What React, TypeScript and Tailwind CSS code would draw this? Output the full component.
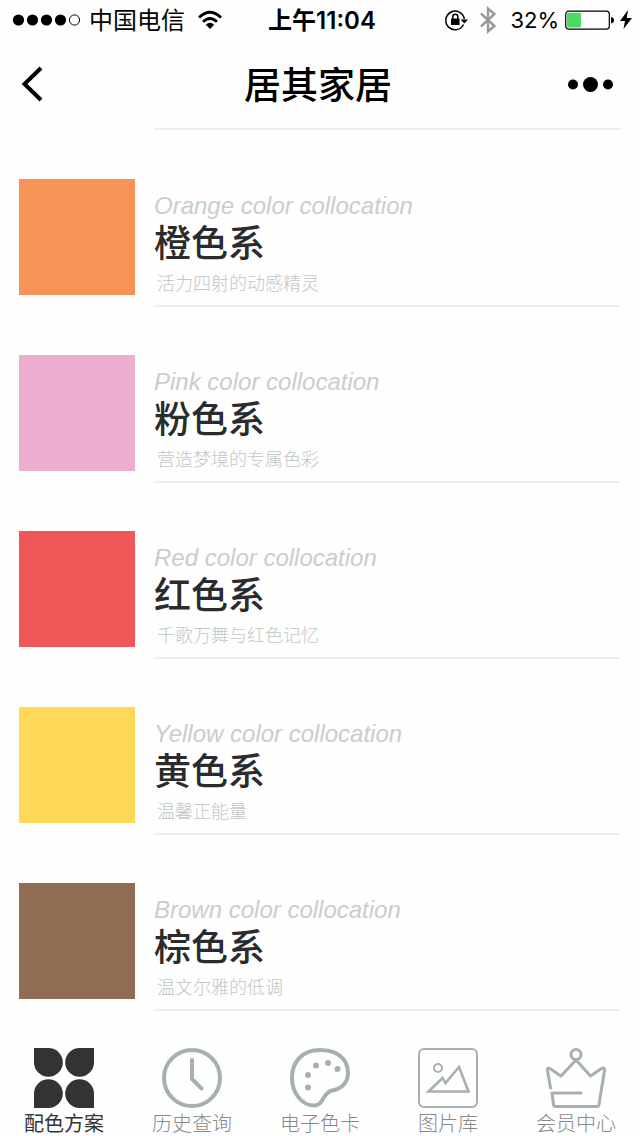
import type { ReactNode } from "react";

interface ColorSeries {
  en: string;
  name: string;
  desc: string;
  swatch: string;
}

const SERIES: ColorSeries[] = [
  { en: "Orange", name: "橙色系", desc: "活力四射的动感精灵", swatch: "bg-[#f79357]" },
  { en: "Pink", name: "粉色系", desc: "营造梦境的专属色彩", swatch: "bg-[#ebaece]" },
  { en: "Red", name: "红色系", desc: "千歌万舞与红色记忆", swatch: "bg-[#f15658]" },
  { en: "Yellow", name: "黄色系", desc: "温馨正能量", swatch: "bg-[#ffd858]" },
  { en: "Brown", name: "棕色系", desc: "温文尔雅的低调", swatch: "bg-[#906c55]" },
];

const PetalsIcon = () => (
  <svg className="size-[60px]" viewBox="0 0 60 60" fill="#333333">
    <path d="M0 0H14.400A14.400 14.400 0 1 1 0 14.400Z" />
    <path d="M60 0H45.600A14.400 14.400 0 1 0 60 14.400Z" />
    <path d="M0 60H14.400A14.400 14.400 0 1 0 0 45.600Z" />
    <path d="M60 60H45.600A14.400 14.400 0 1 1 60 45.600Z" />
  </svg>
);

const ClockIcon = () => (
  <svg className="size-[60px]" viewBox="0 0 60 60" fill="none" stroke="#a7b0b1" strokeWidth="4" strokeLinecap="round" strokeLinejoin="round">
    <circle cx="30" cy="30" r="28" />
    <path d="M30 12V31L39.500 40.500" />
  </svg>
);

const PaletteIcon = () => (
  <svg className="size-[60px]" viewBox="0 0 60 60" fill="none" stroke="#a7b0b1" strokeWidth="4">
    <path d="M30 2C12 2 2 14 2 30C2 45 12 57.500 24 57.500C34 57.500 32 45 42 42.500C52 41 58 34 58 25C58 10 46 2 30 2Z" />
    <g fill="#a7b0b1" stroke="none">
      <circle cx="18" cy="27" r="3" />
      <circle cx="18" cy="39.500" r="3" />
      <circle cx="26" cy="17.500" r="3" />
      <circle cx="38" cy="15" r="3" />
      <circle cx="47.500" cy="21" r="3" />
    </g>
  </svg>
);

const PictureIcon = () => (
  <svg className="size-[60px]" viewBox="0 0 60 60" fill="none" stroke="#a7b0b1" strokeWidth="2">
    <rect x="1" y="1" width="58" height="58" rx="5" />
    <circle cx="20" cy="20" r="4" />
    <path d="M10.500 43.500L24.500 30L27.500 35L41 19L50.500 43.500Z" strokeWidth="2.600" />
  </svg>
);

const CrownIcon = () => (
  <svg className="size-[60px]" viewBox="0 0 60 60" fill="none" stroke="#a7b0b1" strokeWidth="3" strokeLinecap="round" strokeLinejoin="round">
    <circle cx="30" cy="6.500" r="5" />
    <path d="M4.500 40L1.500 22.500Q1 19 4.500 21L15 28L30 12L44.500 28L55.500 20.500Q59 19 58.500 22.500L53 56.500Q52.600 58.500 51 58.500H9.500Q7.800 58.500 7.500 56.500L6 45H35" />
  </svg>
);

const TABS: { label: string; icon: ReactNode; active?: boolean }[] = [
  { label: "配色方案", icon: <PetalsIcon />, active: true },
  { label: "历史查询", icon: <ClockIcon /> },
  { label: "电子色卡", icon: <PaletteIcon /> },
  { label: "图片库", icon: <PictureIcon /> },
  { label: "会员中心", icon: <CrownIcon /> },
];

const StatusBar = () => (
  <div className="grid h-10 grid-cols-[1fr_auto_1fr] items-center pr-2 pl-3 text-2xl">
    <div className="flex items-center">
      <svg className="h-3 w-[69px]" viewBox="0 0 69 12">
        <circle cx="6.500" cy="6" r="5.600" />
        <circle cx="20.500" cy="6" r="5.600" />
        <circle cx="34.500" cy="6" r="5.600" />
        <circle cx="48.500" cy="6" r="5.600" />
        <circle cx="62.500" cy="6" r="5.100" fill="none" stroke="#000" />
      </svg>
      <span className="ml-2 pt-0.5">中国电信</span>
      <svg className="ml-3 h-5 w-[26px]" viewBox="0 0 26 20" fill="none" stroke="#000" strokeWidth="2.800">
        <path d="M2 7.500Q13 -3 24 7.500" />
        <path d="M6 11.800Q13 5 20 11.800" />
        <path d="M8.800 14.800Q13 10.800 17.200 14.800L13 19Z" fill="#000" stroke="none" />
      </svg>
    </div>
    <time className="pt-0.5 font-semibold">上午11:04</time>
    <div className="flex items-center justify-end">
      <svg className="h-6 w-6" viewBox="0 0 24 24" fill="none" stroke="#000" strokeWidth="1.500">
        <path d="M19.500 16.500A9.300 9.300 0 1 1 20.300 11" />
        <path d="M16.500 11.500H24L20.300 15.500Z" fill="#000" stroke="none" />
        <rect x="7" y="10.500" width="8.500" height="6.500" fill="#000" stroke="none" />
        <path d="M8.800 11V8.800A2.500 2.500 0 0 1 13.800 8.800V11" />
      </svg>
      <svg className="ml-3 h-7 w-4" viewBox="0 0 16 28" fill="none" stroke="#999" strokeWidth="2.400">
        <path d="M1 7.500L14.500 20L8 25.500V2.500L14.500 8L1 20.500" />
      </svg>
      <span className="ml-3.5 pt-0.5 text-[22px]">32%</span>
      <svg className="ml-1.5 h-5 w-[49px]" viewBox="0 0 49 20">
        <rect x="0.700" y="1.200" width="43.600" height="18" rx="3" fill="none" stroke="#000" strokeWidth="1.200" />
        <rect x="2" y="2.800" width="14" height="14.800" rx="1" fill="#4cd964" />
        <path d="M46 7Q49 7.500 49 10.200T46 13.500Z" />
      </svg>
      <svg className="ml-1.5 h-5 w-3" viewBox="0 0 12 20">
        <path d="M8 0L0 11H5L3.500 19L12 8H6.800Z" />
      </svg>
    </div>
  </div>
);

const SeriesRow = ({ item }: { item: ColorSeries }) => (
  <li className="pt-12">
    <a href="#" className="flex gap-[19px]">
      <div className={`size-[116px] shrink-0 ${item.swatch}`} />
      <div className="h-32 flex-1 border-b-2 border-[#eeeeee] pt-[13px]">
        <p className="font-['Liberation_Sans','Arial',sans-serif] text-2xl leading-7 text-[#c7cecd] italic">
          {item.en} color collocation
        </p>
        <h2 className="text-[37px] leading-12 font-medium text-[#2b2b2b]">{item.name}</h2>
        <p className="pl-[3px] text-lg leading-8 font-light text-[#c0c8c7]">{item.desc}</p>
      </div>
    </a>
  </li>
);

const App = () => {
  return (
    <div className="flex min-h-screen flex-col bg-[#fefefe] font-['Inter','Noto_Sans_CJK_SC',sans-serif] text-black">
      <StatusBar />
      <header className="grid h-[88px] grid-cols-[1fr_auto_1fr] items-center px-5">
        <button type="button" aria-label="返回" className="justify-self-start">
          <svg className="h-9 w-6" viewBox="0 0 24 36" fill="none" stroke="#000" strokeWidth="4">
            <path d="M21 2L4.500 18L21 34" />
          </svg>
        </button>
        <h1 className="pt-1 pr-1 text-[37px] leading-12 font-medium">居其家居</h1>
        <button type="button" aria-label="更多" className="justify-self-end">
          <svg className="h-4 w-[53px]" viewBox="0 0 53 16">
            <circle cx="6" cy="8.500" r="5" />
            <circle cx="23.500" cy="8.500" r="7.500" />
            <circle cx="41" cy="8.500" r="5" />
          </svg>
        </button>
      </header>
      <main className="px-[19px]">
        <hr className="mb-px ml-[135px] border-t-2 border-[#eeeeee]" />
        <ul>
          {SERIES.map((item) => (
            <SeriesRow key={item.en} item={item} />
          ))}
        </ul>
      </main>
      <nav className="mt-auto grid grid-cols-5 pt-9">
        {TABS.map((tab) => (
          <a
            key={tab.label}
            href="#"
            className={`flex flex-col items-center text-xl ${
              tab.active ? "text-[#333333]" : "font-light text-[#888888]"
            }`}
          >
            {tab.icon}
            <span className="pt-1 leading-6">{tab.label}</span>
          </a>
        ))}
      </nav>
    </div>
  );
};

export default App;
